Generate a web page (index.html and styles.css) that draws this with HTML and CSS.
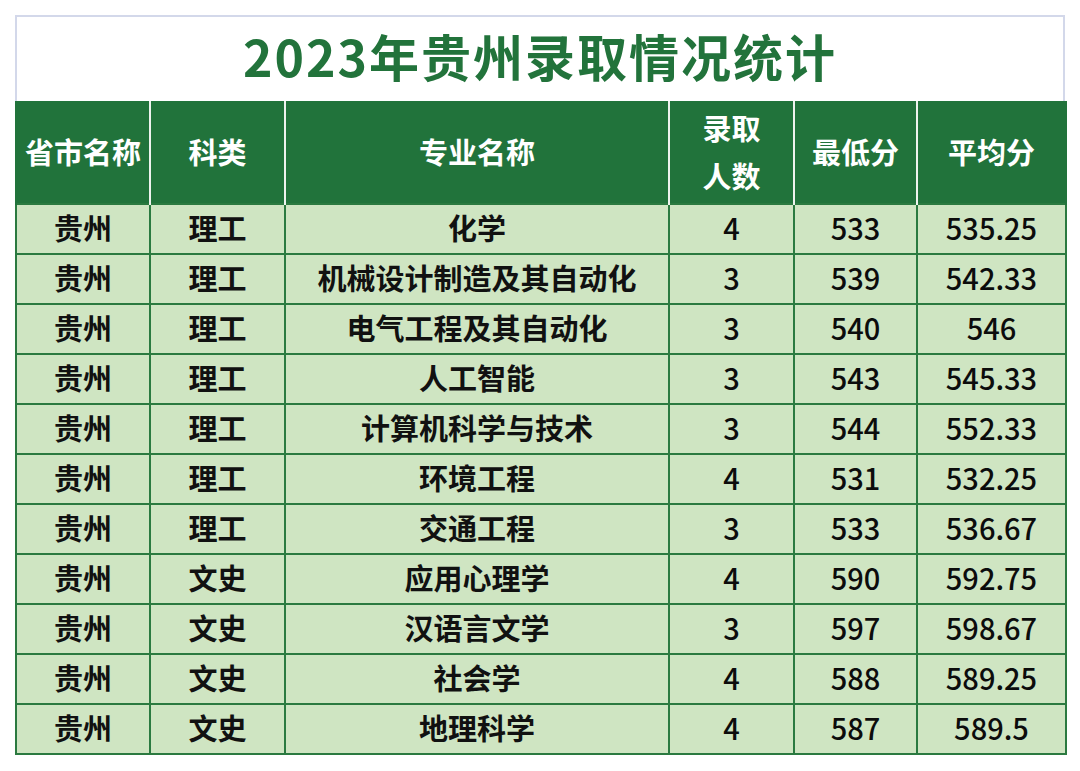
FILE: index.html
```html
<!DOCTYPE html>
<html lang="zh">
<head>
<meta charset="utf-8">
<link rel="stylesheet" href="styles.css">
</head>
<body>
<div class="sheet">
  <div class="title">2023年贵州录取情况统计</div>
  <table class="grid">
    <colgroup>
      <col class="c1"><col class="c2"><col class="c3"><col class="c4"><col class="c5"><col class="c6">
    </colgroup>
    <thead>
      <tr>
        <th>省市名称</th><th>科类</th><th>专业名称</th><th class="two">录取<br>人数</th><th>最低分</th><th>平均分</th>
      </tr>
    </thead>
    <tbody>
      <tr><td>贵州</td><td>理工</td><td>化学</td><td class="num">4</td><td class="num">533</td><td class="num">535.25</td></tr>
      <tr><td>贵州</td><td>理工</td><td>机械设计制造及其自动化</td><td class="num">3</td><td class="num">539</td><td class="num">542.33</td></tr>
      <tr><td>贵州</td><td>理工</td><td>电气工程及其自动化</td><td class="num">3</td><td class="num">540</td><td class="num">546</td></tr>
      <tr><td>贵州</td><td>理工</td><td>人工智能</td><td class="num">3</td><td class="num">543</td><td class="num">545.33</td></tr>
      <tr><td>贵州</td><td>理工</td><td>计算机科学与技术</td><td class="num">3</td><td class="num">544</td><td class="num">552.33</td></tr>
      <tr><td>贵州</td><td>理工</td><td>环境工程</td><td class="num">4</td><td class="num">531</td><td class="num">532.25</td></tr>
      <tr><td>贵州</td><td>理工</td><td>交通工程</td><td class="num">3</td><td class="num">533</td><td class="num">536.67</td></tr>
      <tr><td>贵州</td><td>文史</td><td>应用心理学</td><td class="num">4</td><td class="num">590</td><td class="num">592.75</td></tr>
      <tr><td>贵州</td><td>文史</td><td>汉语言文学</td><td class="num">3</td><td class="num">597</td><td class="num">598.67</td></tr>
      <tr><td>贵州</td><td>文史</td><td>社会学</td><td class="num">4</td><td class="num">588</td><td class="num">589.25</td></tr>
      <tr><td>贵州</td><td>文史</td><td>地理科学</td><td class="num">4</td><td class="num">587</td><td class="num">589.5</td></tr>
    </tbody>
  </table>
</div>
</body>
</html>
```

FILE: styles.css
```css
html, body {
  margin: 0;
  padding: 0;
  background: #ffffff;
}
body {
  font-family: "Noto Sans CJK SC", "Noto Sans", sans-serif;
}
.sheet {
  margin: 15px 0 0 15px;
  width: 1050px;
}
.title {
  padding-bottom: 8px;
  box-sizing: border-box;
  border: 2px solid #d3d8ea;
  border-bottom: none;
  width: 1050px;
  height: 86px;
  display: flex;
  align-items: center;
  justify-content: center;
  color: #22733b;
  font-size: 50px;
  font-weight: 700;
  letter-spacing: 2px;
  line-height: 1;
}
.grid {
  border-collapse: collapse;
  table-layout: fixed;
  width: 1050px;
}
.c1 { width: 134px; }
.c2 { width: 135px; }
.c3 { width: 384px; }
.c4 { width: 125px; }
.c5 { width: 123px; }
.c6 { width: 149px; }
.grid th {
  background: #21733b;
  color: #ffffff;
  font-size: 29px;
  font-weight: 700;
  height: 100px;
  padding: 0 0 2px 0;
  border-left: 2px solid #eef3ee;
  border-right: 2px solid #eef3ee;
  text-align: center;
  line-height: 1.2;
}
.grid th:first-child { border-left: 2px solid #21733b; }
.grid th:last-child { border-right: 2px solid #21733b; }
.grid th.two { line-height: 48px; }
.grid td {
  background: #cfe5c2;
  color: #111111;
  font-size: 29px;
  font-weight: 700;
  height: 44px;
  padding: 0 0 4px 0;
  border: 2px solid #2b7a40;
  text-align: center;
  line-height: 1;
}
.grid td.num {
  font-weight: 500;
  color: #0c0c0c;
}
```
